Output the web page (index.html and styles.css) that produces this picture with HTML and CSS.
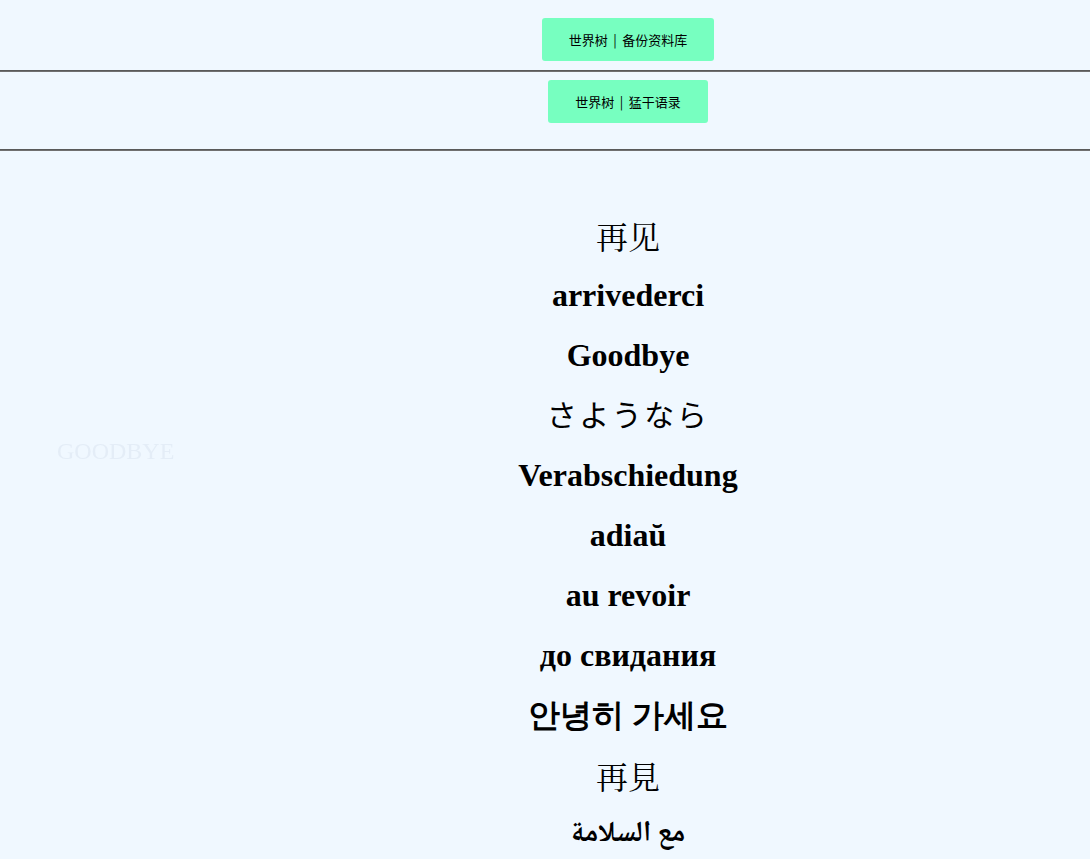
FILE: index.html
```html
<!DOCTYPE html>
<html lang="zh">
<head>
<meta charset="utf-8">
<title>再见</title>
<link rel="stylesheet" href="styles.css">
</head>
<body>
<header class="nav nav-top">
  <a class="btn" href="#">世界树 | 备份资料库</a>
</header>
<hr class="rule">
<nav class="nav nav-second">
  <a class="btn" href="#">世界树 | 猛干语录</a>
</nav>
<hr class="rule">
<div class="watermark">GOODBYE</div>
<main class="words">
  <h1 class="word word-han">再见</h1>
  <h1 class="word">arrivederci</h1>
  <h1 class="word">Goodbye</h1>
  <h1 class="word word-kana" lang="ja">さようなら</h1>
  <h1 class="word">Verabschiedung</h1>
  <h1 class="word">adiaŭ</h1>
  <h1 class="word">au revoir</h1>
  <h1 class="word">до свидания</h1>
  <h1 class="word">안녕히 가세요</h1>
  <h1 class="word word-han" lang="zh-TW">再見</h1>
  <h1 class="word word-arabic" lang="ar" dir="rtl">مع السلامة</h1>
</main>
</body>
</html>
```
FILE: styles.css
```css
html, body {
  margin: 0;
  padding: 0;
  background: #f0f8ff;
}
body {
  font-family: "Liberation Serif", "Times New Roman", serif;
  color: #000;
  overflow: hidden;
}
.nav {
  display: flex;
  justify-content: center;
  padding-left: 166px;
}
.nav-top {
  padding-top: 18px;
  padding-bottom: 9px;
}
.nav-second {
  padding-top: 8px;
  padding-bottom: 26px;
}
.btn {
  display: inline-flex;
  align-items: center;
  justify-content: center;
  height: 43px;
  padding: 0 27px;
  box-sizing: border-box;
  background: #77ffc0;
  border-radius: 3px;
  color: #000;
  text-decoration: none;
  font-family: "Noto Sans CJK SC", "Noto Sans", sans-serif;
  font-size: 13px;
  word-spacing: 2.5px;
  white-space: pre;
}
.rule {
  margin: 0;
  height: 0;
  border: 0;
  border-top: 1px solid #5a5a5a;
  border-bottom: 1px solid #707070;
}
.watermark {
  position: fixed;
  left: 57px;
  top: 437px;
  font-family: "Liberation Serif", "Times New Roman", serif;
  font-size: 24px;
  color: #e4edf7;
  line-height: 28px;
}
.words {
  padding-left: 166px;
  padding-top: 65px;
  text-align: center;
}
.word {
  margin: 0 0 22px 0;
  font-size: 32px;
  line-height: 38px;
  font-weight: bold;
}
.word-han {
  font-family: "Noto Serif CJK SC", "AR PL UMing CN", "Liberation Serif", "Noto Sans CJK SC", serif;
  font-weight: normal;
}
.word-kana {
  font-family: "Noto Sans CJK JP", sans-serif;
  font-weight: normal;
  font-size: 30px;
  letter-spacing: 2.5px;
  position: relative;
  top: -2px;
}
.word-arabic {
  font-family: "Noto Naskh Arabic", "Noto Sans Arabic", "Liberation Serif", serif;
  font-size: 29px;
}
```
